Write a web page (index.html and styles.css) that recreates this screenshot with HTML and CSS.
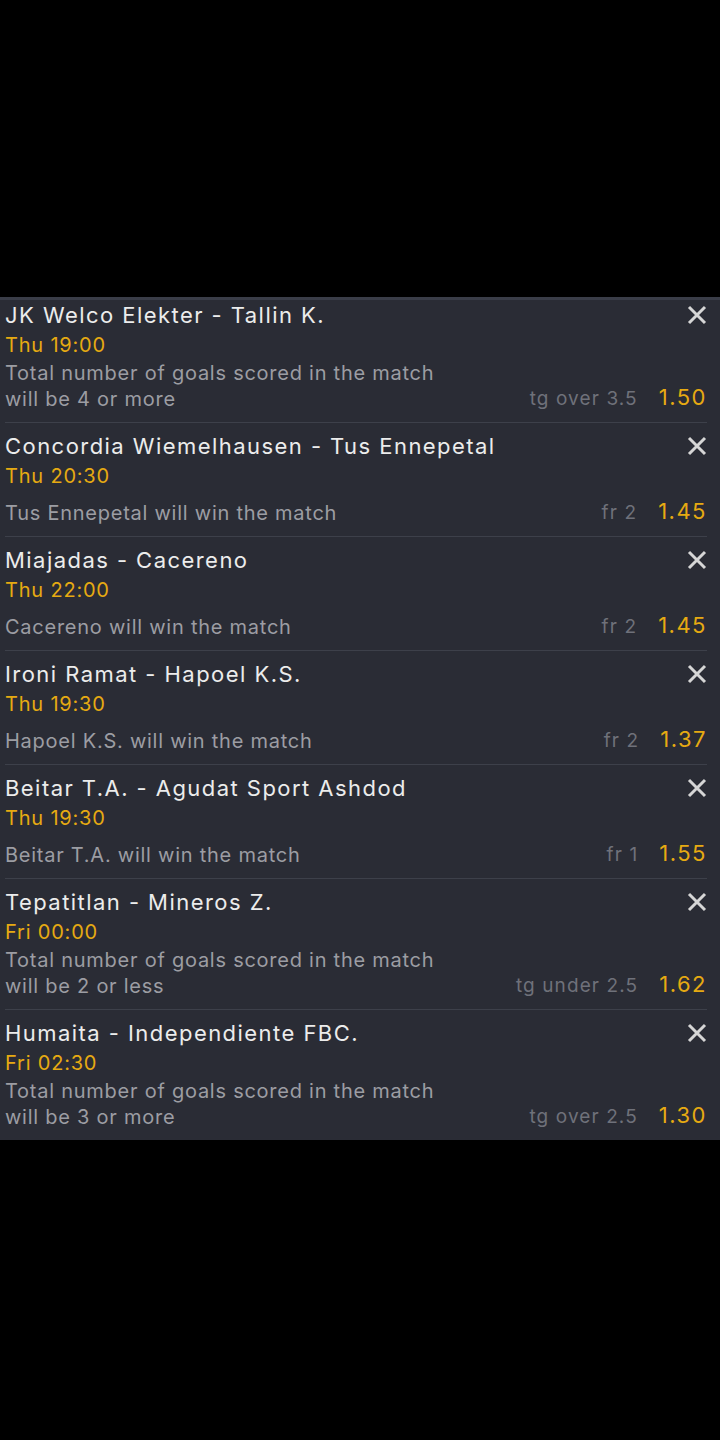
FILE: index.html
```html
<!DOCTYPE html>
<html lang="en">
<head>
<meta charset="utf-8">
<title>Bet slip</title>
<link rel="stylesheet" href="styles.css">
</head>
<body>
<div class="screen">
  <div class="top-space"></div>
  <div class="slip">
    <div class="list">
      <div class="row">
        <div class="head"><span class="title">JK Welco Elekter - Tallin K.</span><span class="close"><svg viewBox="0 0 20 20" width="20" height="20"><path d="M2 2L18 18M18 2L2 18"/></svg></span></div>
        <div class="time">Thu 19:00</div>
        <div class="bottom"><div class="desc">Total number of goals scored in the match<br>will be 4 or more</div><div class="bet"><span class="label">tg over 3.5</span><span class="odds">1.50</span></div></div>
      </div>
      <div class="row">
        <div class="head"><span class="title">Concordia Wiemelhausen - Tus Ennepetal</span><span class="close"><svg viewBox="0 0 20 20" width="20" height="20"><path d="M2 2L18 18M18 2L2 18"/></svg></span></div>
        <div class="time">Thu 20:30</div>
        <div class="bottom"><div class="desc">Tus Ennepetal will win the match</div><div class="bet"><span class="label">fr 2</span><span class="odds">1.45</span></div></div>
      </div>
      <div class="row">
        <div class="head"><span class="title">Miajadas - Cacereno</span><span class="close"><svg viewBox="0 0 20 20" width="20" height="20"><path d="M2 2L18 18M18 2L2 18"/></svg></span></div>
        <div class="time">Thu 22:00</div>
        <div class="bottom"><div class="desc">Cacereno will win the match</div><div class="bet"><span class="label">fr 2</span><span class="odds">1.45</span></div></div>
      </div>
      <div class="row">
        <div class="head"><span class="title">Ironi Ramat - Hapoel K.S.</span><span class="close"><svg viewBox="0 0 20 20" width="20" height="20"><path d="M2 2L18 18M18 2L2 18"/></svg></span></div>
        <div class="time">Thu 19:30</div>
        <div class="bottom"><div class="desc">Hapoel K.S. will win the match</div><div class="bet"><span class="label">fr 2</span><span class="odds">1.37</span></div></div>
      </div>
      <div class="row">
        <div class="head"><span class="title">Beitar T.A. - Agudat Sport Ashdod</span><span class="close"><svg viewBox="0 0 20 20" width="20" height="20"><path d="M2 2L18 18M18 2L2 18"/></svg></span></div>
        <div class="time">Thu 19:30</div>
        <div class="bottom"><div class="desc">Beitar T.A. will win the match</div><div class="bet"><span class="label">fr 1</span><span class="odds">1.55</span></div></div>
      </div>
      <div class="row">
        <div class="head"><span class="title">Tepatitlan - Mineros Z.</span><span class="close"><svg viewBox="0 0 20 20" width="20" height="20"><path d="M2 2L18 18M18 2L2 18"/></svg></span></div>
        <div class="time">Fri 00:00</div>
        <div class="bottom"><div class="desc">Total number of goals scored in the match<br>will be 2 or less</div><div class="bet"><span class="label">tg under 2.5</span><span class="odds">1.62</span></div></div>
      </div>
      <div class="row">
        <div class="head"><span class="title">Humaita - Independiente FBC.</span><span class="close"><svg viewBox="0 0 20 20" width="20" height="20"><path d="M2 2L18 18M18 2L2 18"/></svg></span></div>
        <div class="time">Fri 02:30</div>
        <div class="bottom"><div class="desc">Total number of goals scored in the match<br>will be 3 or more</div><div class="bet"><span class="label">tg over 2.5</span><span class="odds">1.30</span></div></div>
      </div>
    </div>
  </div>
</div>
</body>
</html>
```

FILE: styles.css
```css
html, body {
  margin: 0;
  padding: 0;
  background: #000;
}
.screen {
  width: 720px;
  height: 1440px;
  background: #000;
  font-family: "Inter", "Liberation Sans", sans-serif;
}
.top-space {
  height: 297px;
}
.slip {
  background: #2a2c35;
  border-top: 3px solid #3a3d48;
  height: 840px;
  overflow: hidden;
}
.list {
  margin-top: -8px;
}
.row {
  margin: 0 13px 0 5px;
  padding: 8px 0 10px;
  border-bottom: 1px solid #3d404a;
}
.row:last-child {
  border-bottom: none;
}
.head {
  display: flex;
  justify-content: space-between;
  align-items: center;
  height: 30px;
}
.title {
  color: #ececec;
  font-size: 22px;
  letter-spacing: 1.45px;
  white-space: nowrap;
}
.close {
  display: flex;
  width: 20px;
  height: 20px;
}
.close svg path {
  stroke: #d6d6d6;
  stroke-width: 3;
  fill: none;
}
.time {
  color: #e6aa12;
  font-size: 20px;
  line-height: 30px;
  height: 30px;
  letter-spacing: 0.8px;
}
.bottom {
  display: flex;
  justify-content: space-between;
  align-items: flex-end;
  min-height: 35px;
}
.desc {
  color: #9c9da3;
  font-size: 20px;
  line-height: 26px;
  letter-spacing: 0.75px;
}
.bet {
  display: flex;
  align-items: baseline;
  gap: 21px;
  line-height: 26px;
}
.label {
  color: #6f717a;
  font-size: 19px;
  letter-spacing: 1.1px;
}
.odds {
  color: #e6aa12;
  font-size: 22px;
  letter-spacing: 1.5px;
}
```
